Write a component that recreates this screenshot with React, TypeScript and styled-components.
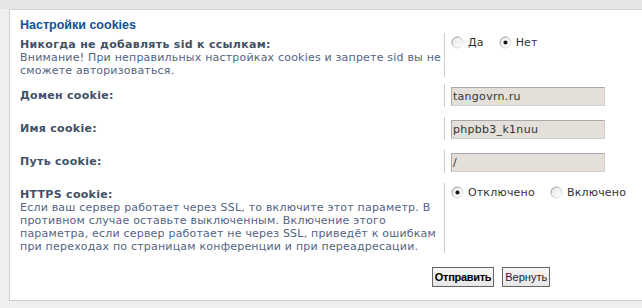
import React from "react";
import styled, { createGlobalStyle } from "styled-components";

const Global = createGlobalStyle`
  html, body { margin: 0; padding: 0; overflow: hidden; background: #efefef; }
  body { font-family: "DejaVu Sans", Verdana, sans-serif; font-size: 11px; letter-spacing: 0.3px; }
  * { box-sizing: border-box; }
`;

const Page = styled.div`
  width: 1000px;
`;

const TopStrip = styled.div`
  height: 9px;
  background: #e4e5e7;
`;

const Panel = styled.div`
  margin-left: 9px;
  width: 963px;
  background: #fff;
  border-top: 1px solid #d2d2d2;
  border-left: 1px solid #d0d0d0;
  border-bottom: 1px solid #cccccc;
  padding: 8px 10px 13px 10px;
`;

const Title = styled.h3`
  margin: 0;
  font-family: "Liberation Sans", Arial, sans-serif;
  font-size: 12.5px;
  line-height: 15px;
  letter-spacing: 0;
  font-weight: bold;
  color: #115098;
`;

const Row = styled.div<{ $gap?: number }>`
  display: flex;
  align-items: stretch;
  margin-bottom: ${(p) => (p.$gap ?? 10)}px;
`;

const Term = styled.div`
  width: 45%;
  flex: none;
  padding-top: 5px;
  line-height: 13px;
`;

const Label = styled.div`
  font-weight: bold;
  color: #425067;
`;

const Explain = styled.div`
  color: #536482;
  letter-spacing: 0.2px;
`;

const Def = styled.div`
  flex: 1;
  border-left: 1px solid #cccccc;
  padding: 3px 0 1px 6px;
  display: flex;
  align-items: flex-start;
`;

const RadioGroup = styled.div`
  display: flex;
  align-items: center;
  line-height: 13px;
`;

const RadioLabel = styled.label`
  display: flex;
  align-items: center;
  gap: 4px;
  margin-right: 15px;
  color: #333;
  letter-spacing: 0.2px;
`;

const TextInput = styled.div`
  width: 154px;
  height: 19px;
  background: #e4e0d9;
  border: 1px solid;
  border-color: #a9a9a9 #d0d0d0 #d0d0d0 #a9a9a9;
  color: #333;
  padding: 2px 2px 0 1px;
  font-size: 11px;
  line-height: 14px;
  white-space: nowrap;
`;

const Buttons = styled.div`
  display: flex;
  justify-content: center;
  gap: 8px;
  margin-top: 14px;
`;

const Button = styled.button<{ $primary?: boolean }>`
  height: 20px;
  padding: 0 2px;
  border: 1px solid #666;
  background: linear-gradient(#f7f7f7, #e6e6e6);
  font-family: "Liberation Sans", Arial, sans-serif;
  font-size: 11px;
  letter-spacing: ${(p) => (p.$primary ? "-0.3px" : "0")};
  font-weight: ${(p) => (p.$primary ? "bold" : "normal")};
  color: ${(p) => (p.$primary ? "#000" : "#1a1a3a")};
`;

const Radio: React.FC<{ checked?: boolean }> = ({ checked }) => (
  <svg width="13" height="13" viewBox="0 0 13 13">
    <defs>
      <linearGradient id="rb" x1="0" y1="0" x2="1" y2="1">
        <stop offset="0" stopColor="#7b7b7b" />
        <stop offset="0.55" stopColor="#c8c8c8" />
        <stop offset="1" stopColor="#f0f0f0" />
      </linearGradient>
      <linearGradient id="rf" x1="0" y1="0" x2="1" y2="1">
        <stop offset="0" stopColor="#e6e6e6" />
        <stop offset="1" stopColor="#ffffff" />
      </linearGradient>
    </defs>
    <circle cx="6.5" cy="6.5" r="5.5" fill="url(#rf)" stroke="url(#rb)" strokeWidth="1" />
    {checked && <circle cx="6.5" cy="6.5" r="2" fill="#111" />}
  </svg>
);

export default function App() {
  return (
    <Page>
      <Global />
      <TopStrip />
      <Panel>
        <Title>Настройки cookies</Title>
        <Row $gap={7}>
          <Term>
            <Label>Никогда не добавлять sid к ссылкам:</Label>
            <Explain>
              Внимание! При неправильных настройках cookies и запрете sid вы не сможете авторизоваться.
            </Explain>
          </Term>
          <Def>
            <RadioGroup>
              <RadioLabel><Radio />Да</RadioLabel>
              <RadioLabel><Radio checked />Нет</RadioLabel>
            </RadioGroup>
          </Def>
        </Row>
        <Row>
          <Term><Label>Домен cookie:</Label></Term>
          <Def><TextInput>tangovrn.ru</TextInput></Def>
        </Row>
        <Row>
          <Term><Label>Имя cookie:</Label></Term>
          <Def><TextInput>phpbb3_k1nuu</TextInput></Def>
        </Row>
        <Row>
          <Term><Label>Путь cookie:</Label></Term>
          <Def><TextInput>/</TextInput></Def>
        </Row>
        <Row $gap={0}>
          <Term>
            <Label>HTTPS cookie:</Label>
            <Explain>
              Если ваш сервер работает через SSL, то включите этот параметр. В противном случае оставьте выключенным. Включение этого параметра, если сервер работает не через SSL, приведёт к ошибкам при переходах по страницам конференции и при переадресации.
            </Explain>
          </Term>
          <Def>
            <RadioGroup>
              <RadioLabel><Radio checked />Отключено</RadioLabel>
              <RadioLabel><Radio />Включено</RadioLabel>
            </RadioGroup>
          </Def>
        </Row>
        <Buttons>
          <Button $primary>Отправить</Button>
          <Button>Вернуть</Button>
        </Buttons>
      </Panel>
    </Page>
  );
}
